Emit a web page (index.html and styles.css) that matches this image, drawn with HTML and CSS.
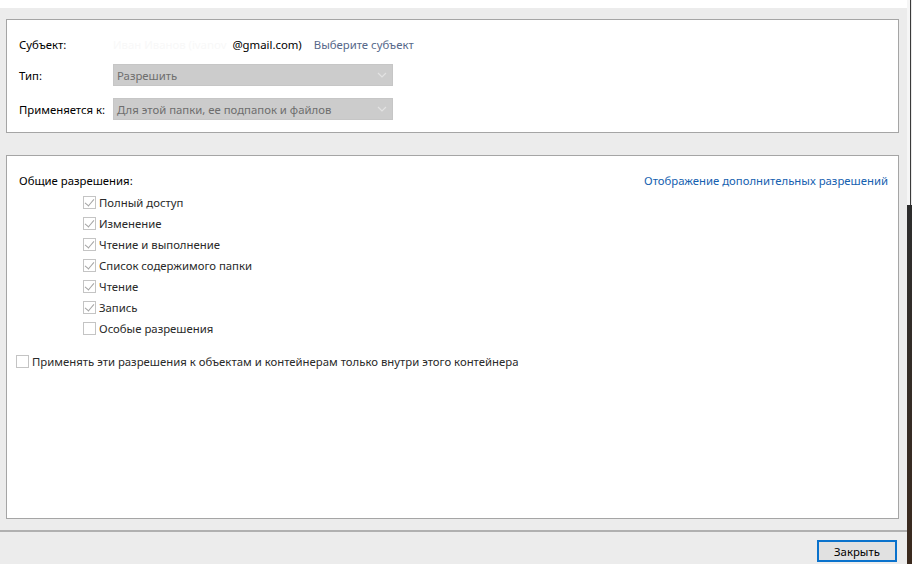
FILE: index.html
```html
<!DOCTYPE html>
<html lang="ru">
<head>
<meta charset="utf-8">
<link rel="stylesheet" href="styles.css">
</head>
<body>
<div class="window">
  <div class="topstrip"></div>
  <div class="content">
    <section class="panel subject-panel">
      <div class="row row-subject">
        <div class="label">Субъект:</div>
        <div class="value"><span class="hidden-name">Иван Иванов (ivanov</span><span class="email">@gmail.com)</span><a class="choose">Выберите субъект</a></div>
      </div>
      <div class="row row-type">
        <div class="label">Тип:</div>
        <div class="select"><span>Разрешить</span><svg class="chev" width="10" height="6" viewBox="0 0 10 6"><path d="M1 1l4 4 4-4" fill="none" stroke="#e2e2e2" stroke-width="1.2"/></svg></div>
      </div>
      <div class="row row-apply">
        <div class="label">Применяется к:</div>
        <div class="select"><span>Для этой папки, ее подпапок и файлов</span><svg class="chev" width="10" height="6" viewBox="0 0 10 6"><path d="M1 1l4 4 4-4" fill="none" stroke="#e2e2e2" stroke-width="1.2"/></svg></div>
      </div>
    </section>
    <section class="panel perms-panel">
      <div class="perms-head">
        <span class="perms-title">Общие разрешения:</span>
        <a class="more-link">Отображение дополнительных разрешений</a>
      </div>
      <ul class="perm-list">
        <li><span class="cb checked"></span>Полный доступ</li>
        <li><span class="cb checked"></span>Изменение</li>
        <li><span class="cb checked"></span>Чтение и выполнение</li>
        <li><span class="cb checked"></span>Список содержимого папки</li>
        <li><span class="cb checked"></span>Чтение</li>
        <li><span class="cb checked"></span>Запись</li>
        <li><span class="cb"></span>Особые разрешения</li>
      </ul>
      <div class="apply-row"><span class="cb"></span>Применять эти разрешения к объектам и контейнерам только внутри этого контейнера</div>
    </section>
  </div>
  <div class="separator"></div>
  <footer class="footer">
    <button class="btn">Закрыть</button>
  </footer>
</div>
<div class="edge"><div class="edge-top"></div><div class="edge-bottom"></div></div>
</body>
</html>
```
FILE: styles.css
```css
html, body {
  margin: 0;
  padding: 0;
  height: 564px;
  overflow: hidden;
}
body {
  display: flex;
  font-family: "Noto Sans", "Open Sans", sans-serif;
  font-size: 11.35px;
  color: #000;
  background: #ececec;
}
.window {
  width: 907px;
  height: 564px;
  display: flex;
  flex-direction: column;
  background: #ececec;
}
.topstrip {
  height: 8px;
  background: #fff;
  flex: none;
}
.content {
  padding: 11px 8px 0 6px;
  display: flex;
  flex-direction: column;
  gap: 22px;
}
.panel {
  background: #fff;
  border: 1px solid #a5a5a5;
}
.subject-panel {
  box-sizing: border-box;
  height: 114px;
  padding: 13px 12px 0 12px;
}
.row {
  display: flex;
  align-items: center;
  height: 22px;
}
.row-type {
  margin-top: 9px;
}
.row-apply {
  margin-top: 12px;
}
.label {
  width: 94px;
  flex: none;
}
.value {
  display: flex;
  align-items: center;
  white-space: nowrap;
}
.hidden-name {
  color: #f8f8f8;
  margin-right: 6px;
}
.choose {
  color: #56688a;
  margin-left: 12px;
}
.select {
  width: 280px;
  height: 22px;
  box-sizing: border-box;
  background: #cccccc;
  border: 1px solid #c6c6c6;
  color: #6e6e6e;
  display: flex;
  align-items: center;
  justify-content: space-between;
  padding: 0 5px 0 3px;
}
.chev {
  display: block;
}
.perms-panel {
  box-sizing: border-box;
  height: 364px;
  padding: 17px 10px 0 12px;
}
.perms-head {
  display: flex;
  justify-content: space-between;
  line-height: 16px;
}
.more-link {
  color: #1561b0;
}
.perm-list {
  list-style: none;
  margin: 3px 0 0 0;
  padding: 0 0 0 64px;
}
.perm-list li {
  height: 21px;
  display: flex;
  align-items: center;
  color: #2a2a2a;
}
.cb {
  width: 13px;
  height: 13px;
  box-sizing: border-box;
  border: 1px solid #c4c4c4;
  background: #fff;
  margin-right: 3px;
  position: relative;
  flex: none;
}
.cb.checked::after {
  content: "";
  position: absolute;
  left: 3px;
  top: 0px;
  width: 4px;
  height: 8px;
  border-right: 1.4px solid #a3a3a3;
  border-bottom: 1.4px solid #a3a3a3;
  transform: rotate(40deg);
}
.apply-row {
  margin: 12px 0 0 -3px;
  height: 21px;
  display: flex;
  align-items: center;
  color: #2a2a2a;
}
.separator {
  margin-top: 11px;
  height: 2px;
  background: #b0b0b0;
  flex: none;
}
.footer {
  display: flex;
  justify-content: flex-end;
  padding: 8px 10px 0 0;
}
.btn {
  width: 80px;
  height: 22px;
  box-sizing: border-box;
  background: #e1e1e1;
  border: 2px solid #0a72cc;
  font-family: inherit;
  font-size: 11.35px;
  color: #000;
  padding: 0;
}
.edge {
  width: 5px;
  display: flex;
  flex-direction: column;
}
.edge-top {
  height: 205px;
  background: linear-gradient(to right, #f6f6f6 0 3px, #3a3a3a 3px 4px, #e8e8e8 4px);
}
.edge-bottom {
  flex: 1;
  background: linear-gradient(to bottom, #2d2d2d, #3b2a1e);
}
```
